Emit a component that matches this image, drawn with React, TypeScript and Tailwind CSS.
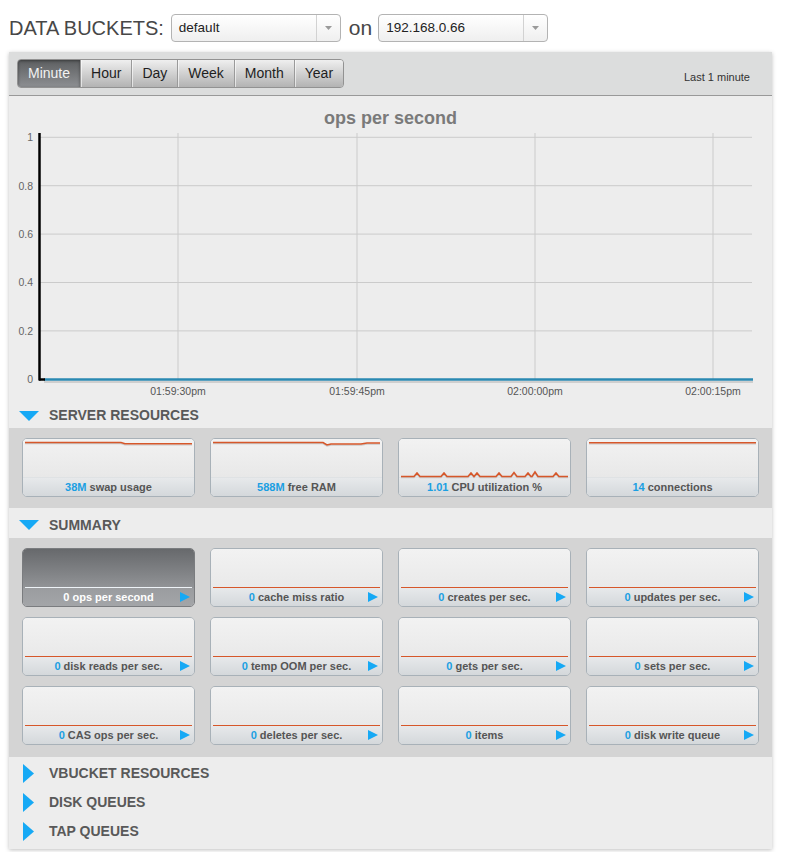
import React from "react";

const ORANGE = "#d6572a";

function Select({ value, width }: { value: string; width: string }) {
  return (
    <div
      className={`${width} h-[28px] flex rounded-[4px] border border-[#b3b3b3] bg-gradient-to-b from-white to-[#efefef] shadow-[inset_0_1px_0_rgba(255,255,255,0.9)]`}
    >
      <div className="flex-1 flex items-center pl-[7px] pt-[1px] text-[13.5px] text-[#222]">{value}</div>
      <div className="w-[24px] flex items-center justify-center border-l border-[#d2d2d2]">
        <svg width="7" height="4" viewBox="0 0 7 4">
          <polygon points="0,0 7,0 3.5,4" fill="#9a9a9a" />
        </svg>
      </div>
    </div>
  );
}

function DownTri() {
  return (
    <svg width="20" height="10" viewBox="0 0 20 10">
      <polygon points="0,0 20,0 10,10" fill="#16a9f5" />
    </svg>
  );
}

function RightTri() {
  return (
    <svg width="11" height="19" viewBox="0 0 11 19">
      <polygon points="0,0 11,9.5 0,19" fill="#16a9f5" />
    </svg>
  );
}

function Arrow() {
  return (
    <svg width="10" height="10" viewBox="0 0 10 10" className="absolute right-[4px] top-1/2 -translate-y-1/2">
      <polygon points="0,0 10,5 0,10" fill="#16a9f5" />
    </svg>
  );
}

type ChartKind = "swap" | "ram" | "cpu" | "conn";

function ServerChart({ kind }: { kind: ChartKind }) {
  let d = "";
  if (kind === "swap") d = "M2 3.5 L98 3.5 L102 4.8 L169 4.8";
  if (kind === "ram") d = "M2 3.5 L112 3.5 L116 6 L120 5 L150 5 L156 4 L169 4";
  if (kind === "conn") d = "M2 3.8 L169 3.8";
  if (kind === "cpu") {
    const spikes = [18, 45, 72, 78, 100, 115, 129, 136, 157];
    let p = "M2 37.5";
    spikes.forEach((x, i) => {
      const h = i === 7 ? 4.5 : i === 5 ? 4 : 3.5;
      p += ` L${x - 3} 37.5 L${x} ${37.5 - h} L${x + 3} 37.5`;
    });
    p += " L169 37.5";
    d = p;
  }
  return (
    <svg className="absolute inset-0" width="171" height="40" viewBox="0 0 171 40">
      <path d={d} transform="translate(0,1.2)" fill="none" stroke="#c9c9c9" strokeWidth="1.2" />
      <path d={d} fill="none" stroke={ORANGE} strokeWidth="1.6" />
    </svg>
  );
}

function ServerTile({ value, label, kind }: { value: string; label: string; kind: ChartKind }) {
  return (
    <div className="h-[59px] rounded-[5px] border border-[#a8b1b8] overflow-hidden flex flex-col bg-[#eeeeee]">
      <div className="relative h-[39px] bg-gradient-to-b from-[#f2f2f2] to-[#e8e8e8] border-b border-[#dfe2e4]">
        <ServerChart kind={kind} />
      </div>
      <div className="flex-1 flex items-center justify-center bg-gradient-to-b from-[#e7e9eb] to-[#d4d8db] text-[11px] font-bold text-[#555]">
        <span className="text-[#1b9fe2]">{value}</span>
        <span>&nbsp;{label}</span>
      </div>
    </div>
  );
}

function SummaryTile({ label, selected }: { label: string; selected?: boolean }) {
  if (selected) {
    return (
      <div className="relative h-[59px] rounded-[5px] border border-[#7a7c7f] overflow-hidden flex flex-col">
        <div className="h-[39px] bg-gradient-to-b from-[#67696c] to-[#929497] flex flex-col justify-end px-[2px]">
          <div className="h-px bg-[#eef3f7]" />
        </div>
        <div className="relative flex-1 flex items-center justify-center bg-gradient-to-b from-[#9a9c9f] to-[#a3a5a8] text-[11px] font-bold text-white">
          <span>0&nbsp;{label}</span>
          <Arrow />
        </div>
      </div>
    );
  }
  return (
    <div className="relative h-[59px] rounded-[5px] border border-[#a8b1b8] overflow-hidden flex flex-col">
      <div className="h-[39px] bg-gradient-to-b from-[#f2f2f2] to-[#e9e9e9] flex flex-col justify-end px-[2px]">
        <div className="h-px bg-[#d6572a]" />
      </div>
      <div className="relative flex-1 flex items-center justify-center bg-gradient-to-b from-[#e7e9eb] to-[#d4d8db] text-[11px] font-bold text-[#555]">
        <span className="text-[#1b9fe2]">0</span>
        <span>&nbsp;{label}</span>
        <Arrow />
      </div>
    </div>
  );
}

function Chart() {
  const gy = [10.3, 58.7, 107.1, 155.5, 203.9, 252.3];
  const ylabels = ["1", "0.8", "0.6", "0.4", "0.2", "0"];
  const vx = [169, 348, 526, 704];
  const xlabels = ["01:59:30pm", "01:59:45pm", "02:00:00pm", "02:00:15pm"];
  return (
    <svg width="763" height="275" viewBox="0 0 763 275" className="block">
      {gy.slice(0, 5).map((y) => (
        <line key={y} x1="31" x2="743" y1={y} y2={y} stroke="#cbcbcb" strokeWidth="1" />
      ))}
      {vx.map((x) => (
        <line key={x} x1={x} x2={x} y1="6" y2="252" stroke="#cbcbcb" strokeWidth="1" />
      ))}
      <line x1="35" x2="744" y1="255" y2="255" stroke="#cfcfcf" strokeWidth="2" />
      <line x1="35" x2="744" y1="252.5" y2="252.5" stroke="#2a89b2" strokeWidth="2.5" />
      <line x1="30.5" x2="30.5" y1="6" y2="253.5" stroke="#000" strokeWidth="2.5" />
      <line x1="30" x2="36" y1="252.5" y2="252.5" stroke="#000" strokeWidth="2.5" />
      {gy.map((y, i) => (
        <text
          key={i}
          x="24"
          y={y + 3.8}
          textAnchor="end"
          fontSize="10.5"
          fill="#666"
          fontFamily="'Liberation Sans', Arial, sans-serif"
        >
          {ylabels[i]}
        </text>
      ))}
      {vx.map((x, i) => (
        <text
          key={x}
          x={x}
          y="267.5"
          textAnchor="middle"
          fontSize="10.5"
          fill="#555"
          fontFamily="'Liberation Sans', Arial, sans-serif"
        >
          {xlabels[i]}
        </text>
      ))}
    </svg>
  );
}

export default function App() {
  const tabs = ["Minute", "Hour", "Day", "Week", "Month", "Year"];
  const summary = [
    "ops per second",
    "cache miss ratio",
    "creates per sec.",
    "updates per sec.",
    "disk reads per sec.",
    "temp OOM per sec.",
    "gets per sec.",
    "sets per sec.",
    "CAS ops per sec.",
    "deletes per sec.",
    "items",
    "disk write queue",
  ];
  return (
    <div className="w-[786px] min-h-[852px] bg-white font-['Liberation_Sans',Arial,sans-serif]">
      <div className="flex items-center pl-[9px] pt-[14px] h-[42px]">
        <span className="text-[20px] text-[#474747]">DATA BUCKETS:</span>
        <div className="ml-[7px]">
          <Select value="default" width="w-[170px]" />
        </div>
        <span className="ml-[8px] text-[21px] text-[#474747]">on</span>
        <div className="ml-[6px]">
          <Select value="192.168.0.66" width="w-[170px]" />
        </div>
      </div>

      <div className="ml-[9px] mt-[10px] w-[763px] bg-[#ededed] shadow-[0_1px_4px_rgba(0,0,0,0.25)]">
        <div className="h-[44px] bg-[#dcdddd] border-b border-[#999] flex items-start justify-between pl-[8px] pr-[22px] pt-[7px]">
          <div className="flex h-[29px] rounded-[4px] border border-[#929292] overflow-hidden">
            {tabs.map((t, i) =>
              i === 0 ? (
                <div
                  key={t}
                  className="flex items-center px-[10px] text-[14px] text-[#f2f2f2] bg-gradient-to-b from-[#5d5f61] to-[#8d8f92] shadow-[inset_0_1px_3px_rgba(0,0,0,0.4)]"
                >
                  {t}
                </div>
              ) : (
                <div
                  key={t}
                  className="flex items-center px-[10px] text-[14px] text-[#1e1e1e] bg-gradient-to-b from-[#efefef] to-[#b3b3b3] border-l border-[#9a9a9a] shadow-[inset_1px_0_0_rgba(255,255,255,0.6)]"
                >
                  {t}
                </div>
              )
            )}
          </div>
          <div className="pt-[10px] text-[11px] text-[#333]">Last 1 minute</div>
        </div>

        <div className="pt-[13px]">
          <div className="text-center text-[18px] leading-[18px] font-bold text-[#7a7a7a]">ops per second</div>
          <Chart />
        </div>

        <div className="h-[26px] pt-[1px] flex items-center pl-[10px]">
          <DownTri />
          <span className="ml-[10px] text-[14px] font-bold text-[#595959]">SERVER RESOURCES</span>
        </div>
        <div className="bg-[#d4d4d4] px-[13px] pt-[10px] pb-[11px] grid grid-cols-4 gap-x-[15px]">
          <ServerTile value="38M" label="swap usage" kind="swap" />
          <ServerTile value="588M" label="free RAM" kind="ram" />
          <ServerTile value="1.01" label="CPU utilization %" kind="cpu" />
          <ServerTile value="14" label="connections" kind="conn" />
        </div>

        <div className="h-[30px] pt-[4px] flex items-center pl-[10px]">
          <DownTri />
          <span className="ml-[10px] text-[14px] font-bold text-[#595959]">SUMMARY</span>
        </div>
        <div className="bg-[#d4d4d4] px-[13px] pt-[10px] pb-[12px] grid grid-cols-4 gap-x-[15px] gap-y-[10px]">
          {summary.map((s, i) => (
            <SummaryTile key={s} label={s} selected={i === 0} />
          ))}
        </div>

        <div className="pt-[2px] pb-[3px]">
          {["VBUCKET RESOURCES", "DISK QUEUES", "TAP QUEUES"].map((s) => (
            <div key={s} className="h-[29px] flex items-center pl-[14px]">
              <RightTri />
              <span className="ml-[15px] text-[14px] font-bold text-[#595959]">{s}</span>
            </div>
          ))}
        </div>
      </div>
    </div>
  );
}
